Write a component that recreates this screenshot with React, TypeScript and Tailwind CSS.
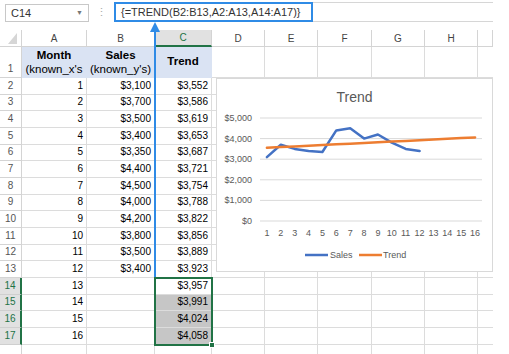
import React from "react";

const rows: [number, string, string][] = [
  [1, "$3,100", "$3,552"],
  [2, "$3,700", "$3,586"],
  [3, "$3,500", "$3,619"],
  [4, "$3,400", "$3,653"],
  [5, "$3,350", "$3,687"],
  [6, "$4,400", "$3,721"],
  [7, "$4,500", "$3,754"],
  [8, "$4,000", "$3,788"],
  [9, "$4,200", "$3,822"],
  [10, "$3,800", "$3,856"],
  [11, "$3,500", "$3,889"],
  [12, "$3,400", "$3,923"],
  [13, "", "$3,957"],
  [14, "", "$3,991"],
  [15, "", "$4,024"],
  [16, "", "$4,058"],
];

const sales = [3100, 3700, 3500, 3400, 3350, 4400, 4500, 4000, 4200, 3800, 3500, 3400];
const trend = [3552, 3586, 3619, 3653, 3687, 3721, 3754, 3788, 3822, 3856, 3889, 3923, 3957, 3991, 4024, 4058];

const px = (i: number) => 44 + 13.875 * (i + 0.5);
const py = (v: number) => 143 - v * 0.0206;
const pts = (vals: number[]) => vals.map((v, i) => `${px(i).toFixed(1)},${py(v).toFixed(1)}`).join(" ");

const cell = "flex items-end justify-end pr-[3px] pb-[3px] border-r border-b border-[#dcdcdc] text-[10px] leading-none text-black";
const hdr = "flex items-center justify-center border-r border-b border-[#d4d4d4] text-[10px] text-[#444]";

function TrendChart() {
  const ticks = [5000, 4000, 3000, 2000, 1000, 0];
  return (
    <div className="absolute left-[216px] top-[78px] w-[277px] h-[194px] bg-white border border-[#d9d9d9]">
      <svg width="277" height="194" className="absolute -left-px -top-px">
        <text x="138.5" y="24" textAnchor="middle" fontSize="14" fill="#595959" fontFamily="Liberation Sans, sans-serif">
          Trend
        </text>
        {ticks.map((t) => (
          <g key={t}>
            <line x1="44" x2="266" y1={py(t)} y2={py(t)} stroke="#d9d9d9" strokeWidth="1" />
            <text x="36" y={py(t) + 3} textAnchor="end" fontSize="9" fill="#595959" fontFamily="Liberation Sans, sans-serif">
              {t === 0 ? "$0" : `$${t.toLocaleString("en-US")}`}
            </text>
          </g>
        ))}
        {trend.map((_, i) => (
          <text key={i} x={px(i)} y="158" textAnchor="middle" fontSize="9" fill="#595959" fontFamily="Liberation Sans, sans-serif">
            {i + 1}
          </text>
        ))}
        <polyline points={pts(sales)} fill="none" stroke="#4472c4" strokeWidth="2.5" strokeLinejoin="round" strokeLinecap="round" />
        <polyline points={pts(trend)} fill="none" stroke="#ed7d31" strokeWidth="2.5" strokeLinejoin="round" strokeLinecap="round" />
        <line x1="89" x2="112" y1="177" y2="177" stroke="#4472c4" strokeWidth="2.5" />
        <text x="114" y="180" fontSize="9" fill="#595959" fontFamily="Liberation Sans, sans-serif">Sales</text>
        <line x1="143" x2="166" y1="177" y2="177" stroke="#ed7d31" strokeWidth="2.5" />
        <text x="167" y="180" fontSize="9" fill="#595959" fontFamily="Liberation Sans, sans-serif">Trend</text>
      </svg>
    </div>
  );
}

export default function App() {
  return (
    <div className="relative w-[509px] h-[354px] overflow-hidden bg-white font-['Liberation_Sans',Arial,sans-serif]">
      {/* formula bar */}
      <div className="flex items-start h-[30px] pl-[5px] pt-[2px]">
        <div className="mt-[2px] w-[84px] h-[18px] border border-[#c8c8c8] flex items-center justify-between pl-[5px] pr-[5px] text-[11px] text-[#333]">
          <span>C14</span>
          <span className="text-[7px] text-[#777]">▼</span>
        </div>
        <div className="w-[25px] h-[20px] flex items-center justify-center text-[11px] text-[#aaa]">⋮</div>
        <div className="w-[379px] h-[20px] border-y border-[#d6d6d6] flex">
          <div className="w-[199px] h-[20px] -my-px border-2 border-[#2f8be6] flex items-center pl-[5px] text-[11px] text-[#333] whitespace-nowrap">
            {"{=TREND(B2:B13,A2:A13,A14:A17)}"}
          </div>
        </div>
      </div>

      {/* sheet */}
      <div className="grid w-[493px] grid-cols-[22px_65px_68px_57px_53px_53px_54px_53px_53px_15px] grid-rows-[17px_31px_repeat(16,16.67px)_9px]">
        <div className="flex items-end justify-end pr-[4px] pb-[2px] border-r border-b border-[#d4d4d4]">
          <svg width="9" height="11"><polygon points="9,0 9,11 0,11" fill="#d6d6d6" /></svg>
        </div>
        {["A", "B", "C", "D", "E", "F", "G", "H", ""].map((l) =>
          l === "C" ? (
            <div key={l} className="flex items-center justify-center bg-[#e1e1e1] border-r border-[#d4d4d4] border-b-2 border-b-[#217346] text-[10px] text-[#217346]">
              C
            </div>
          ) : (
            <div key={l || "i"} className={hdr}>{l}</div>
          )
        )}

        {/* row 1 */}
        <div className="flex items-end justify-center pb-[3px] border-r border-b border-[#d4d4d4] text-[10px] text-[#555] leading-none">1</div>
        <div className="flex flex-col items-center justify-center bg-[#dae3f3] border-r border-b border-[#dae3f3] text-[11.5px] leading-[14px] text-black">
          <span className="font-bold">Month</span>
          <span className="whitespace-nowrap">(known_x's</span>
        </div>
        <div className="flex flex-col items-center justify-center bg-[#dae3f3] border-r border-b border-[#dae3f3] text-[11.5px] leading-[14px] text-black">
          <span className="font-bold">Sales</span>
          <span className="whitespace-nowrap">(known_y's)</span>
        </div>
        <div className="flex items-center justify-center bg-[#dae3f3] border-r border-b border-[#dae3f3] text-[11.5px] font-bold text-black">Trend</div>
        {[0, 1, 2, 3, 4].map((k) => (
          <div key={k} className="border-r border-b border-[#dcdcdc]" />
        ))}
        <div className="border-b border-[#dcdcdc]" />

        {rows.map(([m, s, t], i) => {
          const r = i + 2;
          const sel = r >= 14;
          return (
            <React.Fragment key={r}>
              <div
                className={
                  sel
                    ? "flex items-center justify-center bg-[#e1e1e1] border-r-2 border-r-[#217346] border-b border-b-[#cfcfcf] text-[10px] text-[#217346] leading-none"
                    : "flex items-center justify-center border-r border-b border-[#d4d4d4] text-[10px] text-[#555] leading-none"
                }
              >
                {r}
              </div>
              <div className={cell}>{m}</div>
              <div className={cell}>{s}</div>
              <div className={`${cell} ${r >= 15 ? "bg-[#c6c6c6]" : ""}`}>{t}</div>
              {[0, 1, 2, 3, 4].map((k) => (
                <div key={k} className="border-r border-b border-[#dcdcdc]" />
              ))}
              <div className="border-b border-[#dcdcdc]" />
            </React.Fragment>
          );
        })}

        <div className="border-r border-[#d4d4d4]" />
        {[0, 1, 2, 3, 4, 5, 6, 7].map((k) => (
          <div key={k} className="border-r border-[#dcdcdc]" />
        ))}
        <div />
      </div>

      {/* blue arrow from formula bar to B2:B13 */}
      <div className="absolute left-[154px] top-[30px] w-[2px] h-[248px] bg-[#2f8be6]" />
      <svg className="absolute left-[150px] top-[22px]" width="10" height="10">
        <polygon points="5,0 10,10 0,10" fill="#2f8be6" />
      </svg>

      {/* selection C14:C17 */}
      <div className="absolute left-[154px] top-[277px] w-[59px] h-[69px] border-2 border-[#217346]" />
      <div className="absolute left-[209px] top-[342px] w-[6px] h-[6px] bg-[#217346] border border-white" />

      <TrendChart />
    </div>
  );
}
